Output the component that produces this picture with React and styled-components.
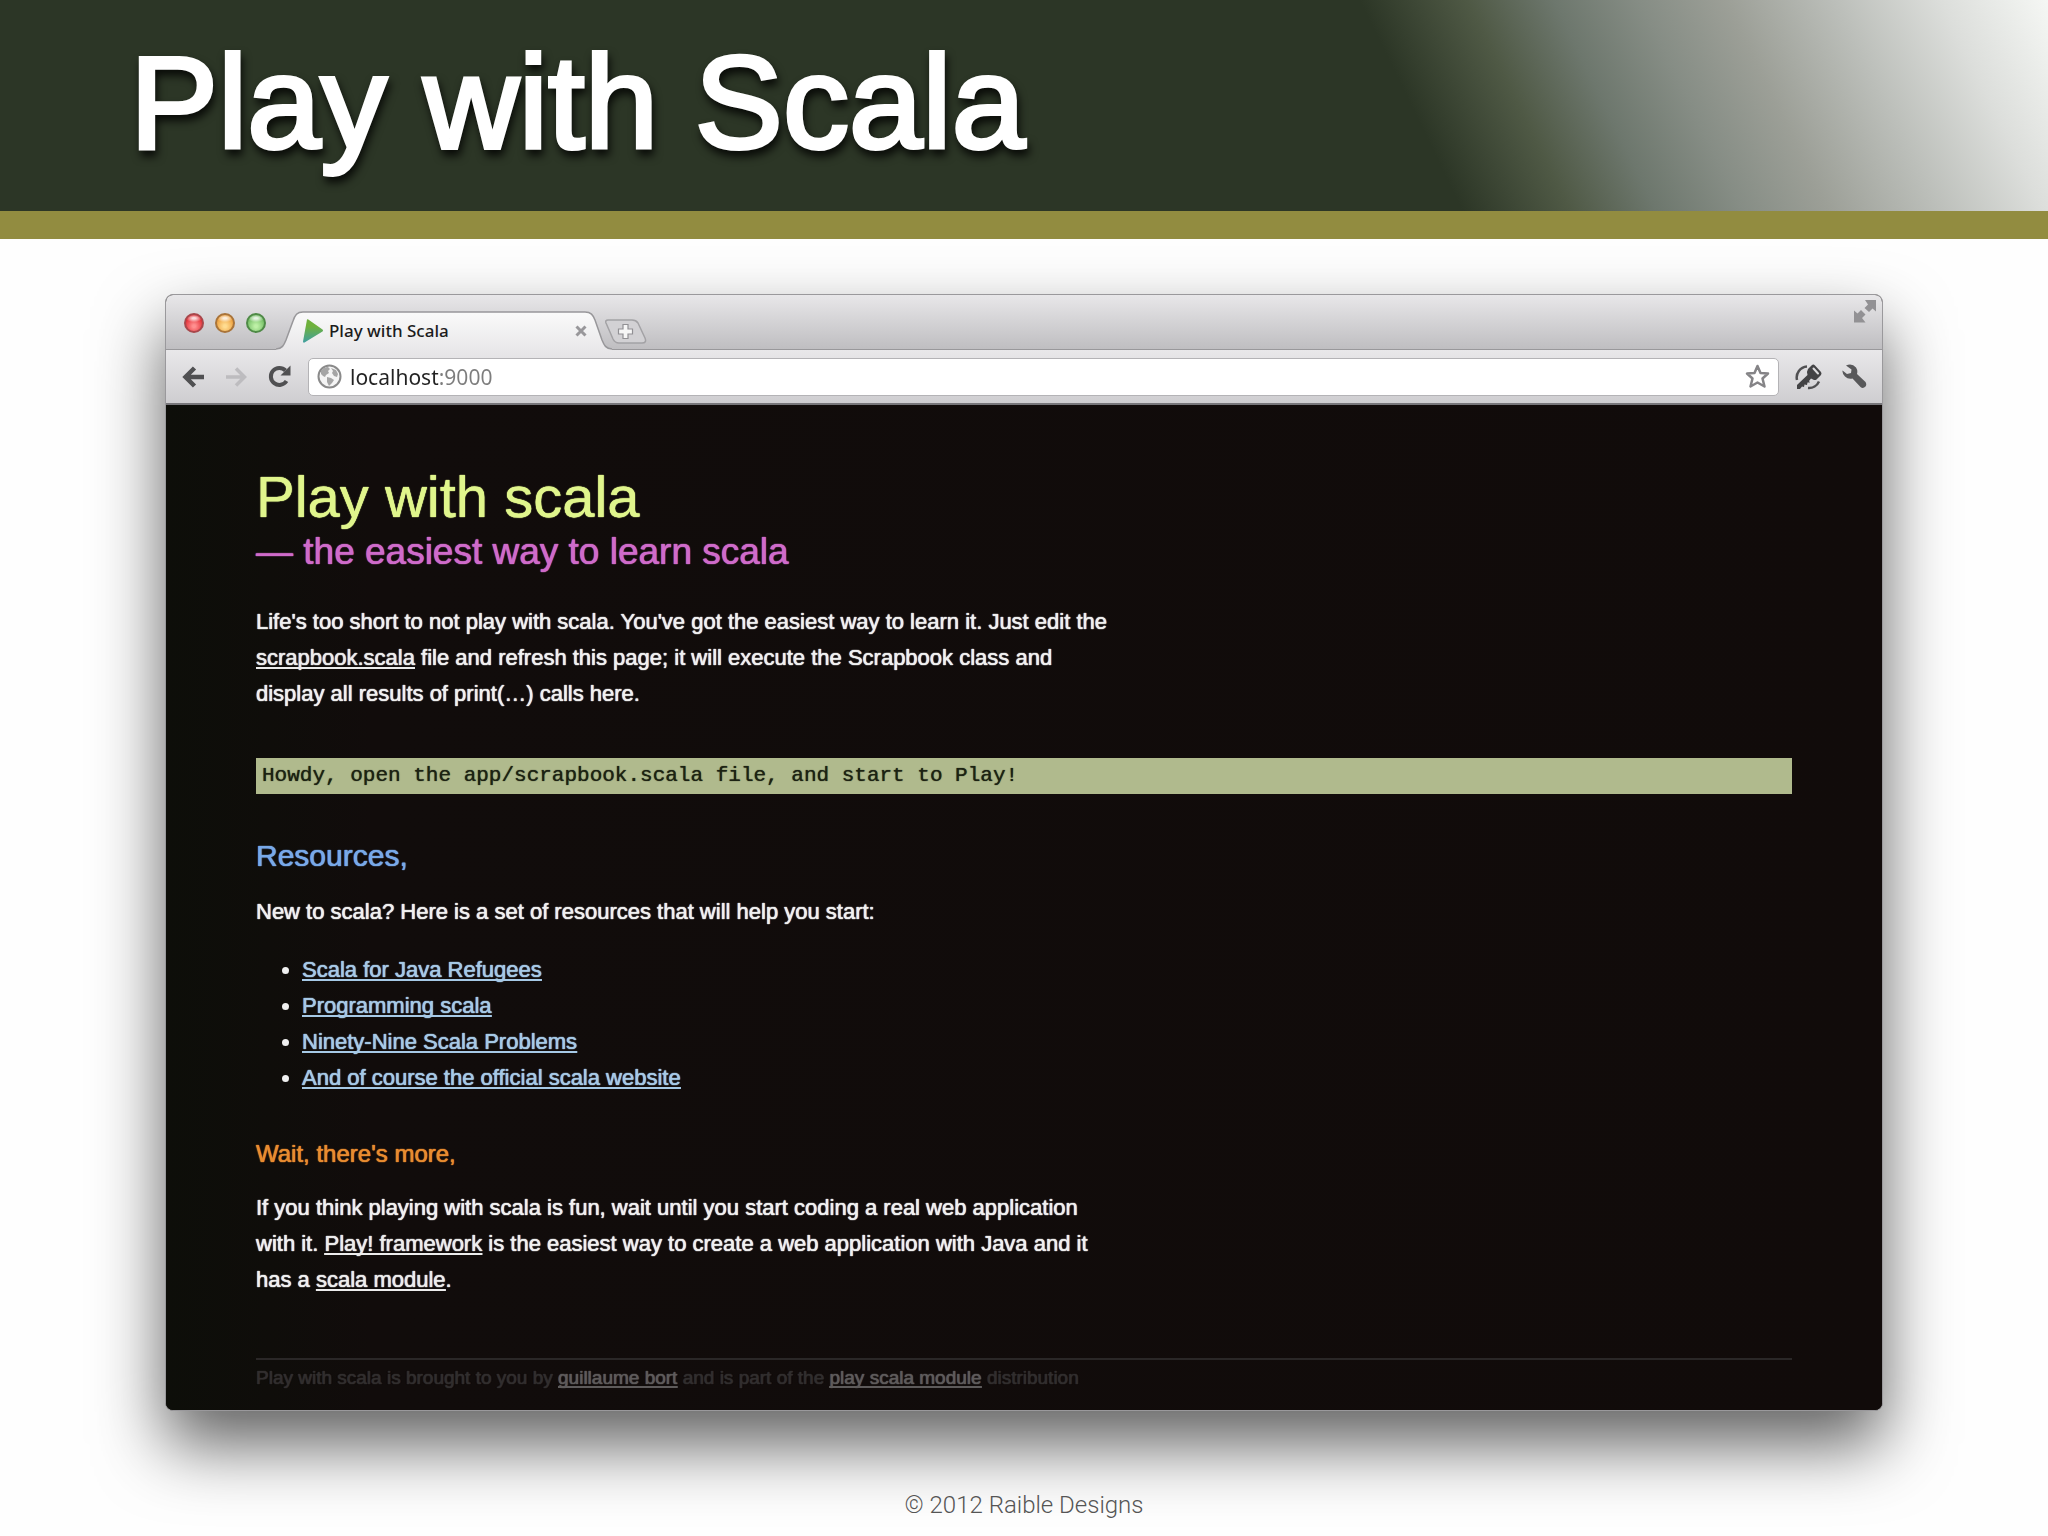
import React from "react";
import styled, { createGlobalStyle } from "styled-components";

const GlobalStyle = createGlobalStyle`
  * {
    box-sizing: border-box;
  }
  body {
    margin: 0;
    background: #fefefe;
    font-family: "Liberation Sans", Arial, sans-serif;
  }
`;

/* ---------- slide ---------- */

const Slide = styled.div`
  min-height: 100vh;
  display: flex;
  flex-direction: column;
  overflow: hidden;
`;

const Banner = styled.header`
  height: 239px;
  padding: 0 130px 6px;
  display: flex;
  align-items: center;
  border-bottom: 28px solid #928c40;
  background: linear-gradient(
      64deg,
      #2c3626 68%,
      #4f5945 73%,
      #6d776d 77%,
      #868d85 81%,
      #9c9f97 85%,
      #bbbeb9 90%,
      #dcdedb 95%,
      #f5f7f4 100%
    )
    padding-box;
`;

const SlideTitle = styled.h1`
  margin: 0;
  color: #fff;
  font-size: 132px;
  line-height: 148px;
  font-weight: 400;
  white-space: nowrap;
  -webkit-text-stroke: 4px #fff;
  filter: drop-shadow(2px 6px 4px rgba(0, 0, 0, 0.8));
`;

const Caption = styled.footer`
  margin-top: 78px;
  color: #555;
  font-family: Roboto, sans-serif;
  font-size: 24px;
  line-height: 32px;
  font-weight: 300;
  text-align: center;
`;

/* ---------- browser chrome ---------- */

const BrowserWindow = styled.main`
  margin: 55px 165px 0;
  border: 1px solid #9a999c;
  border-radius: 8px;
  background: #100c0a;
  box-shadow: 0 34px 68px rgba(0, 0, 0, 0.62);
`;

const TabStrip = styled.div`
  height: 54px;
  padding-left: 18px;
  display: flex;
  align-items: flex-end;
  border-radius: 7px 7px 0 0;
  background: linear-gradient(#e8e7e9, #bfbec1);
`;

const TrafficLights = styled.div`
  align-self: center;
  display: flex;
  gap: 11px;
  margin: 2px 10px 0 0;
`;

const Light = styled.button`
  width: 20px;
  height: 20px;
  padding: 0;
  border: 2px solid ${(props) => props.$edge};
  border-radius: 50%;
  background: radial-gradient(
      ellipse 8px 4px at 50% 20%,
      rgba(255, 255, 255, 0.8) 20%,
      rgba(255, 255, 255, 0) 100%
    ),
    radial-gradient(
      circle at 50% 70%,
      ${(props) => props.$glow} 10%,
      ${(props) => props.$color} 75%
    );
`;

const Tab = styled.div`
  position: relative;
  width: 336px;
  height: 38px;
  padding: 2px 25px 0 27px;
  display: flex;
  align-items: center;
  gap: 6px;
`;

const TabShape = styled.svg`
  position: absolute;
  left: 0;
  top: 0;
`;

const PlayIcon = styled.svg`
  position: relative;
  flex: none;
`;

const TabTitle = styled.span`
  position: relative;
  flex: 1;
  color: #1c1c1c;
  font-family: "Noto Sans", sans-serif;
  font-size: 17px;
  line-height: 24px;
  font-weight: 500;
`;

const IconButton = styled.button`
  position: relative;
  flex: none;
  display: flex;
  padding: 0;
  border: 0;
  background: none;
`;

const NewTabButton = styled(IconButton)`
  margin: 0 auto 5px -7px;
`;

const FullscreenButton = styled(IconButton)`
  align-self: flex-start;
  margin: 5px 6px 0 0;
`;

const Toolbar = styled.div`
  height: 56px;
  padding: 0 15px 0 16px;
  display: flex;
  align-items: center;
  gap: 16px;
  border-top: 1px solid #99989b;
  border-bottom: 2px solid #77767a;
  background: linear-gradient(#e9e8ea, #cecdd0);
`;

const ToolGroup = styled.div`
  display: flex;
  align-items: center;
  gap: 20px;
`;

const AddressBar = styled.form`
  flex: 1;
  height: 38px;
  padding: 0 8px;
  display: flex;
  align-items: center;
  gap: 8px;
  border: 1px solid #b4b3b6;
  border-radius: 5px;
  background: #fff;
`;

// host in near black, port in grey
const AddressInput = styled.input`
  flex: 1;
  min-width: 0;
  padding: 0;
  border: 0;
  outline: 0;
  font-family: "Noto Sans", sans-serif;
  font-size: 21px;
  line-height: 30px;
  color: transparent;
  background: linear-gradient(90deg, #222 88px, #7d7d7d 88px) text;
`;

/* ---------- page in the browser ---------- */

const Page = styled.article`
  padding: 62px 90px 18px;
  border-radius: 0 0 7px 7px;
  background: linear-gradient(90deg, #0d0e09, #110c0b 12%, #110b0a);
  color: #f0f0f0;
  font-size: 22px;
  line-height: 36px;
  text-shadow: 0 0 1px currentColor, 0 0 1px currentColor;
`;

const Title = styled.h1`
  margin: 0;
  color: #e0f58c;
  font-size: 58px;
  line-height: 60px;
  font-weight: 400;
`;

const Subtitle = styled.p`
  margin: 0 0 27px;
  color: #cf6bca;
  font-size: 37px;
  line-height: 50px;
`;

const Paragraph = styled.p`
  max-width: 862px;
  margin: 0;
`;

const Output = styled.pre`
  margin: 46px 0 44px;
  padding: 0 6px;
  background: #b0ba8d;
  color: #1c2212;
  font-family: "Liberation Mono", "Courier New", monospace;
  font-size: 21px;
  line-height: 36px;
  text-shadow: 0 0 1px currentColor;
`;

const Heading = styled.h2`
  margin: 0 0 20px;
  color: #78a9e8;
  font-size: 30px;
  line-height: 36px;
  font-weight: 400;
`;

const SubHeading = styled.h3`
  margin: 0 0 18px;
  color: #e88c30;
  font-size: 24px;
  line-height: 36px;
  font-weight: 400;
`;

const ResourceList = styled.ul`
  margin: 22px 0 40px;
  padding-left: 46px;
`;

const TextLink = styled.a`
  color: ${(props) => props.$color || "#ececec"};
  text-decoration: underline 2px;
  text-decoration-skip-ink: none;
  text-underline-offset: 2px;
`;

const PageFooter = styled.footer`
  margin-top: 60px;
  padding-top: 4px;
  border-top: 2px solid #2a2727;
  color: #312e2e;
  font-size: 19px;
  line-height: 28px;
`;

const resources = [
  "Scala for Java Refugees",
  "Programming scala",
  "Ninety-Nine Scala Problems",
  "And of course the official scala website",
];

function BrowserTabs() {
  return (
    <TabStrip>
      <TrafficLights>
        <Light aria-label="Close" $edge="#a8474b" $color="#e0262e" $glow="#ff8f8f" />
        <Light aria-label="Minimize" $edge="#a9743a" $color="#eb9a35" $glow="#ffdc90" />
        <Light aria-label="Zoom" $edge="#4f8a47" $color="#6cb85e" $glow="#bdf0a6" />
      </TrafficLights>

      <Tab>
        <TabShape width="336" height="39" viewBox="0 0 336 39" aria-hidden="true">
          <defs>
            <linearGradient id="tabFill" x1="0" y1="0" x2="0" y2="1">
              <stop offset="0" stopColor="#fafafa" />
              <stop offset="1" stopColor="#e9e8ea" />
            </linearGradient>
          </defs>
          <path
            d="M0 39V38C6 38 8 34 10 29L17 10C19 4 21 1 27 1H309C315 1 317 4 319 9L326 29C328 34 330 38 336 38V39Z"
            fill="url(#tabFill)"
          />
          <path
            d="M0 38C6 38 8 34 10 29L17 10C19 4 21 1 27 1H309C315 1 317 4 319 9L326 29C328 34 330 38 336 38"
            fill="none"
            stroke="#98979a"
            strokeWidth="1.5"
          />
        </TabShape>
        <PlayIcon width="20" height="24" viewBox="0 0 20 24" aria-hidden="true">
          <defs>
            <linearGradient id="playFill" x1="0" y1="0" x2="0" y2="1">
              <stop offset="0.3" stopColor="#6fb13c" />
              <stop offset="1" stopColor="#3f9fa0" />
            </linearGradient>
          </defs>
          <path d="M4 0.5Q5 0 6 1L19.5 10.5Q20.5 11.5 19.5 12.5L1.5 23.5Q0 24 0 22.5Z" fill="url(#playFill)" />
        </PlayIcon>
        <TabTitle>Play with Scala</TabTitle>
        <IconButton aria-label="Close tab">
          <svg width="12" height="12" viewBox="0 0 12 12">
            <path d="M1.5 1.5L10.5 10.5M10.5 1.5L1.5 10.5" stroke="#98979a" strokeWidth="3" />
          </svg>
        </IconButton>
      </Tab>

      <NewTabButton aria-label="New tab">
        <svg width="42" height="25" viewBox="0 0 42 25">
          <path
            d="M3 1H27Q31 1 33 4L40 19Q42 24 37 24H14Q10 24 8 20L1 4Q0 1 3 1Z"
            fill="#d2d1d4"
            stroke="#a3a2a5"
            strokeWidth="1.5"
          />
          <path
            d="M18 5.5H23V10H27.5V15H23V19.5H18V15H13.5V10H18Z"
            fill="#f6f6f6"
            stroke="#919094"
            strokeWidth="1.2"
          />
        </svg>
      </NewTabButton>

      <FullscreenButton aria-label="Full screen">
        <svg width="22" height="23" viewBox="0 0 22 23" fill="#929194">
          <path d="M11 0H22V11.5L18.5 8.500L15 12L10.5 8L14 4.5Z" />
          <path d="M0 10.5L3.5 13.5L7 10L11.5 14.5L8 18L11.5 22.5H0Z" />
        </svg>
      </FullscreenButton>
    </TabStrip>
  );
}

function BrowserToolbar() {
  return (
    <Toolbar>
      <ToolGroup>
        <IconButton aria-label="Back">
          <svg width="23" height="22" viewBox="0 0 23 22" fill="none" stroke="#505052" strokeWidth="4.5">
            <path d="M12.5 2L3.5 11L12.5 20M4 11H22" />
          </svg>
        </IconButton>
        <IconButton aria-label="Forward">
          <svg width="23" height="22" viewBox="0 0 23 22" fill="none" stroke="#bdbcbf" strokeWidth="3.5">
            <path d="M11 2.5L19.5 11L11 19.5M19 11H1" />
          </svg>
        </IconButton>
        <IconButton aria-label="Reload">
          <svg width="24" height="23" viewBox="0 0 24 23">
            <path d="M17.5 5.5A8.5 8.5 0 1 0 18.5 16" fill="none" stroke="#505052" strokeWidth="4" />
            <path d="M22.5 0.5V10.5H12.5Z" fill="#505052" />
          </svg>
        </IconButton>
      </ToolGroup>

      <AddressBar>
        <svg width="25" height="25" viewBox="0 0 25 25" aria-hidden="true">
          <circle cx="12.5" cy="12.5" r="11" fill="#f4f4f4" stroke="#8a8a8a" strokeWidth="2" />
          <path d="M4 7Q7 3 11 3L13 5L11 7L12 9L9 11L8 13L6 12L4 10Z" fill="#a5a5a5" />
          <path d="M14 4L19 6L21 10L20 13L17 12L15 9L16 7Z" fill="#a5a5a5" />
          <path d="M10 13L14 14L17 16L15 19L12 22L10 18Z" fill="#a5a5a5" />
        </svg>
        <AddressInput aria-label="Address" defaultValue="localhost:9000" />
        <IconButton type="button" aria-label="Bookmark this page">
          <svg width="25" height="25" viewBox="0 0 25 25">
            <path
              d="M12.5 2L15.5 9L23 9.5L17.5 14.5L19.5 22.5L12.5 18.5L5.5 22.5L7.5 14.5L2 9.5L9.5 9Z"
              fill="#fff"
              stroke="#858487"
              strokeWidth="2.5"
              strokeLinejoin="round"
            />
          </svg>
        </IconButton>
      </AddressBar>

      <ToolGroup>
        <IconButton aria-label="Extension">
          <svg width="27" height="26" viewBox="0 0 27 26">
            <path d="M2 16A11 11 0 0 1 12 2.5" fill="none" stroke="#505052" strokeWidth="2.5" />
            <path d="M13 24A11 11 0 0 0 24 17.5" fill="none" stroke="#505052" strokeWidth="2.5" />
            <path
              d="M13 5L17 1Q18.5 0 20 1.5L26 8Q27 9.5 26 11L21.5 15.5Q20 16.5 18 15.5L16 14.5L14 17L15 18.5L12.5 18.5L12 21L9.5 20.5L9 23L7 22.5L5 25L2 25L2 21L12.5 11Q11.5 7 13 5Z"
              fill="#434345"
            />
            <path d="M18.5 4.5L23 9.5" stroke="#dddcde" strokeWidth="2" strokeLinecap="round" />
          </svg>
        </IconButton>
        <IconButton aria-label="Settings">
          <svg width="25" height="25" viewBox="0 0 25 25">
            <path
              d="M4 1.5Q10 -1 14 3.5Q16 6.5 15 10L23.5 18Q25 20.5 23.5 22.5Q21 25 18.5 23L10.5 14.5Q6 15.5 3 12.5Q0 9.5 0.5 6.5L5 10L9 9L9.500 5.5Z"
              fill="#58585a"
            />
          </svg>
        </IconButton>
      </ToolGroup>
    </Toolbar>
  );
}

function ScalaPage() {
  return (
    <Page>
      <Title>Play with scala</Title>
      <Subtitle>— the easiest way to learn scala</Subtitle>
      <Paragraph>
        Life's too short to not play with scala. You've got the easiest way to
        learn it. Just edit the <TextLink href="#">scrapbook.scala</TextLink>{" "}
        file and refresh this page; it will execute the Scrapbook class and
        display all results of print(…) calls here.
      </Paragraph>

      <Output>Howdy, open the app/scrapbook.scala file, and start to Play!</Output>

      <Heading>Resources,</Heading>
      <Paragraph>
        New to scala? Here is a set of resources that will help you start:
      </Paragraph>
      <ResourceList>
        {resources.map((name) => (
          <li key={name}>
            <TextLink href="#" $color="#a6c9e6">{name}</TextLink>
          </li>
        ))}
      </ResourceList>

      <SubHeading>Wait, there's more,</SubHeading>
      <Paragraph>
        If you think playing with scala is fun, wait until you start coding a
        real web application with it.{" "}
        <TextLink href="#">Play! framework</TextLink> is the easiest way to
        create a web application with Java and it has a{" "}
        <TextLink href="#">scala module</TextLink>.
      </Paragraph>

      <PageFooter>
        Play with scala is brought to you by{" "}
        <TextLink href="#" $color="#5e5b5b">guillaume bort</TextLink> and is
        part of the{" "}
        <TextLink href="#" $color="#5e5b5b">play scala module</TextLink>{" "}
        distribution
      </PageFooter>
    </Page>
  );
}

export default function App() {
  return (
    <>
      <GlobalStyle />
      <Slide>
        <Banner>
          <SlideTitle>Play with Scala</SlideTitle>
        </Banner>
        <BrowserWindow>
          <BrowserTabs />
          <BrowserToolbar />
          <ScalaPage />
        </BrowserWindow>
        <Caption>© 2012 Raible Designs</Caption>
      </Slide>
    </>
  );
}
